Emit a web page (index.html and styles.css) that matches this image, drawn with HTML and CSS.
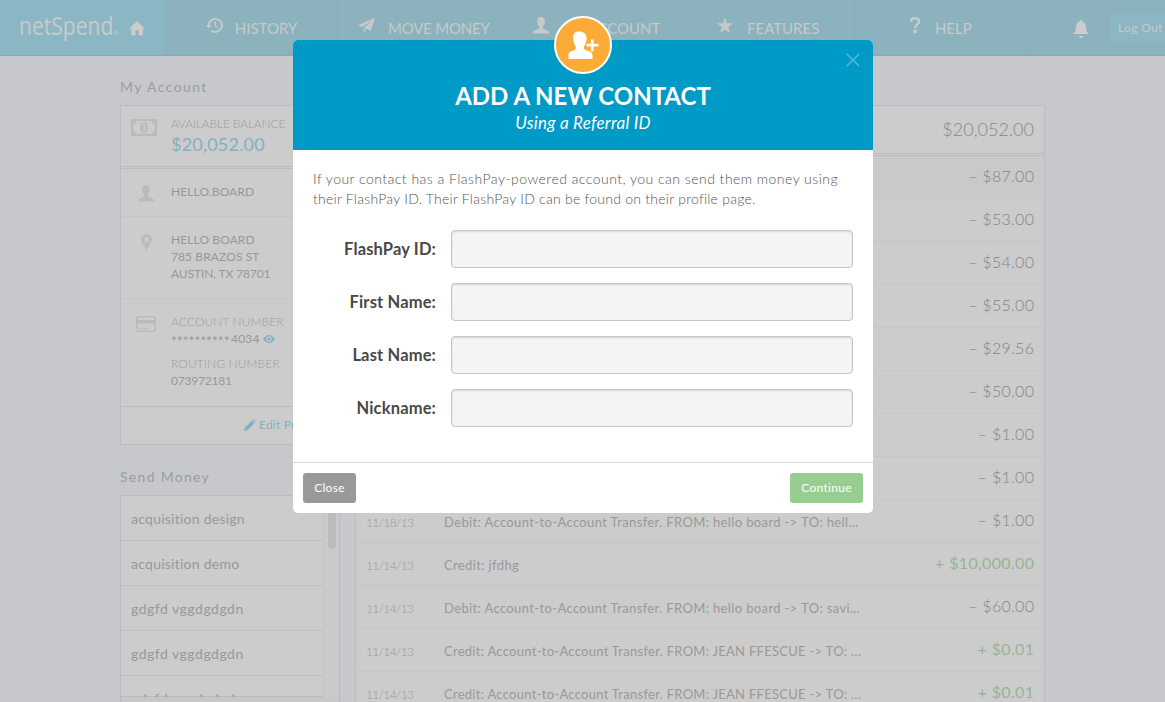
FILE: index.html
```html
<!DOCTYPE html>
<html lang="en">
<head>
<meta charset="utf-8">
<title>Add a New Contact</title>
<link rel="stylesheet" href="styles.css">
</head>
<body>
<svg class="defs" width="0" height="0">
  <symbol id="user" viewBox="0 0 18 17"><path d="M9 0C6 0 4.800 2 5.200 5c.2 2 .9 3.500 1.800 4.600v1.600C6.500 12.500.5 13 .5 16.500h17c0-3.500-6-4-6.500-5.300V9.600C11.900 8.500 12.600 7 12.800 5 13.200 2 12 0 9 0z"/></symbol>
</svg>
<header class="nav">
  <div class="brand"><span class="logo">netSpend</span><i class="reg">®</i>
    <svg class="home" width="16" height="15" viewBox="0 0 16 15"><path d="M8 0L0 8h2.200v6.500h4.300V9h3v5.500h4.300V8H16z"/></svg>
  </div>
  <a class="item history"><svg width="17" height="17" viewBox="0 0 17 17"><path d="M2.700 8.500a6.600 6.600 0 1 1 2.400 5" fill="none" stroke="currentColor" stroke-width="2"/><path d="M0 8h5.400l-2.700 3.800zM8.300 4.500h1.500v4l2.200 2-1 1-2.700-2.500z"/></svg><span>HISTORY</span></a>
  <a class="item move"><svg width="17" height="15" viewBox="0 0 17 15"><path d="M17 0L0 7l4.300 1.900L14 2.500 6 9.800l6.800 2.900zM5.600 10.500v4l2.500-2.900z"/></svg><span>MOVE MONEY</span></a>
  <a class="item account"><svg width="18" height="17"><use href="#user"/></svg><span>MY ACCOUNT</span></a>
  <a class="item features"><svg width="16" height="16" viewBox="0 0 16 16"><path d="M8 0l2 5.800h6l-4.800 3.600 1.800 6L8 11.900l-5 3.500 1.800-6L0 5.800h6z"/></svg><span>FEATURES</span></a>
  <a class="item help"><svg width="12" height="17" viewBox="0 0 12 17"><path d="M2 5C2 2.500 3.500 1.300 6 1.300s4 1.300 4 3.400C10 7.400 6.200 7.500 6.200 11" fill="none" stroke="currentColor" stroke-width="2.500"/><circle cx="6.100" cy="14.500" r="1.900"/></svg><span>HELP</span></a>
  <div class="tools">
    <svg class="bell" width="16" height="18" viewBox="0 0 16 18"><path d="M8 0c.9 0 1.300.7 1.400 1.500 2.500.8 3.400 3 3.600 5.500.3 3.500.8 5 3 7H0c2.200-2 2.700-3.500 3-7 .2-2.500 1.100-4.700 3.600-5.500C6.700.7 7.100 0 8 0zM5.500 16h5c-.5 1-1.500 1.800-2.500 1.800S6 17 5.500 16z"/></svg>
    <a class="logout">Log Out</a>
  </div>
</header>
<main class="page">
  <aside class="side">
    <h2>My Account</h2>
    <section class="panel">
      <div class="row balance">
        <div class="ic"><svg width="26" height="17" viewBox="0 0 26 17"><path fill-rule="evenodd" d="M0 0h26v17H0zM5 2a3 3 0 0 1-3 3v7a3 3 0 0 1 3 3h16a3 3 0 0 1 3-3V5a3 3 0 0 1-3-3z"/><ellipse cx="13" cy="8.500" rx="4" ry="5.500"/><path class="cut" d="M11.300 5.500l1.200-1h1.600v6h1.100v1.300h-3.600v-1.300h1.100V6.200l-1 .4z"/></svg></div>
        <div><p class="cap avail">AVAILABLE BALANCE</p><p class="money">$20,052.00</p></div>
      </div>
      <div class="row name">
        <div class="ic"><svg width="18" height="17"><use href="#user"/></svg></div>
        <p class="user">HELLO.BOARD</p>
      </div>
      <div class="row address">
        <div class="ic"><svg width="11" height="17" viewBox="0 0 11 17"><path fill-rule="evenodd" d="M5.500 0A5.400 5.400 0 0 0 .1 5.500C.1 9 4 12 5.500 17 7 12 10.900 9 10.900 5.500A5.400 5.400 0 0 0 5.500 0zm0 3a2.500 2.500 0 1 1 0 5 2.500 2.500 0 0 1 0-5z"/></svg></div>
        <div><p class="user">HELLO BOARD</p><p>785 BRAZOS ST</p><p class="city">AUSTIN, TX 78701</p></div>
      </div>
      <div class="row numbers">
        <div class="ic"><svg width="20" height="16" viewBox="0 0 20 16"><rect x=".75" y=".75" width="18.500" height="14.500" rx="1.500" fill="none" stroke="currentColor" stroke-width="1.500"/><path d="M1 4h18v3.500H1zM3 12h3v1H3zm4 0h3.500v1H7z"/></svg></div>
        <div>
          <p class="cap acct">ACCOUNT NUMBER</p>
          <p class="masked"><span class="stars">**********</span><span>4034</span><svg width="12" height="8" viewBox="0 0 12 8"><path fill-rule="evenodd" d="M0 4q6-8 12 0-6 8-12 0zm6-2.700a2.700 2.700 0 1 0 0 5.400 2.700 2.700 0 0 0 0-5.400z"/><circle cx="6" cy="4" r="1.500"/></svg></p>
          <p class="cap routing">ROUTING NUMBER</p>
          <p class="digits">073972181</p>
        </div>
      </div>
      <div class="edit"><svg width="12" height="12" viewBox="0 0 12 12"><path d="M0 12l1-3.700L7.700 1.600l2.700 2.700L3.700 11zM8.500.9l.9-.9L12 2.600l-.9.9z"/></svg><span>Edit Profile</span></div>
    </section>
    <h2 class="send">Send Money</h2>
    <section class="panel list">
      <ul><li>acquisition design</li><li>acquisition demo</li><li class="wide">gdgfd vggdgdgdn</li><li class="wide">gdgfd vggdgdgdn</li><li class="wide">gdgfd vggdgdgdn</li></ul>
      <div class="track"><div class="thumb"></div></div>
    </section>
    <div class="listfoot"></div>
  </aside>
  <section class="panel ledger">
    <div class="total">$20,052.00</div>
    <div class="tx first"><span class="amt">– $87.00</span></div>
    <div class="tx"><span class="amt">– $53.00</span></div>
    <div class="tx"><span class="amt">– $54.00</span></div>
    <div class="tx"><span class="amt">– $55.00</span></div>
    <div class="tx"><span class="amt">– $29.56</span></div>
    <div class="tx"><span class="amt">– $50.00</span></div>
    <div class="tx"><span class="amt">– $1.00</span></div>
    <div class="tx"><span class="amt">– $1.00</span></div>
    <div class="tx"><time>11/18/13</time><span class="desc">Debit: Account-to-Account Transfer. FROM: hello board -&gt; TO: hell…</span><span class="amt">– $1.00</span></div>
    <div class="tx"><time>11/14/13</time><span class="desc">Credit: jfdhg</span><span class="amt plus">+ $10,000.00</span></div>
    <div class="tx"><time>11/14/13</time><span class="desc">Debit: Account-to-Account Transfer. FROM: hello board -&gt; TO: savi…</span><span class="amt">– $60.00</span></div>
    <div class="tx"><time>11/14/13</time><span class="desc fe">Credit: Account-to-Account Transfer. FROM: JEAN FFESCUE -&gt; TO: …</span><span class="amt plus">+ $0.01</span></div>
    <div class="tx"><time>11/14/13</time><span class="desc fe">Credit: Account-to-Account Transfer. FROM: JEAN FFESCUE -&gt; TO: …</span><span class="amt plus">+ $0.01</span></div>
  </section>
</main>
<div class="modal">
  <div class="badge"><svg width="32" height="29" viewBox="0 0 32 29"><path d="M11 .5C6.800.5 4.800 3 5.200 7.500c.3 3.500 1 6 2.600 8v2.300C7 20 .5 19.500.5 24v4h24v-4c0-4.500-7.500-4-8.500-6.200v-2.300c1.500-2 2.300-4.500 2.600-8C19 3 15.200.5 11 .5z"/><path d="M18.500 12.800h4.400V8.400h2.700v4.400h4.900v2.700h-4.900v4.700h-2.700v-4.700h-4.400z"/></svg></div>
  <header class="mhead">
    <svg class="close" width="14" height="14" viewBox="0 0 14 14"><path d="M.7.7l12.600 12.600M13.300.7L.7 13.300"/></svg>
    <h1>ADD A NEW CONTACT</h1>
    <p>Using a Referral ID</p>
  </header>
  <div class="mbody">
    <p class="intro"><span class="l1">If your contact has a FlashPay-powered account, you can send them money using</span><br><span class="l2">their FlashPay ID. Their FlashPay ID can be found on their profile page.</span></p>
    <label class="field"><span>FlashPay ID:</span><input type="text"></label>
    <label class="field"><span>First Name:</span><input type="text"></label>
    <label class="field"><span>Last Name:</span><input type="text"></label>
    <label class="field"><span>Nickname:</span><input type="text"></label>
  </div>
  <footer class="mfoot"><button class="btn">Close</button><button class="btn go">Continue</button></footer>
</div>
</body>
</html>
```
FILE: styles.css
```css
* { box-sizing: border-box; margin: 0; padding: 0; }
html, body { height: 702px; overflow: hidden; }
body { background: #c7c8cb; font-family: Lato, "Open Sans", sans-serif; font-size: 12px; color: #999; }
svg { fill: currentColor; display: block; flex: none; }
.defs { position: absolute; }

.nav { display: flex; height: 56px; background: #8cb2bd; border-bottom: 1px solid #86aab6; color: #c6caca; }
.brand { flex: none; width: 166px; display: flex; align-items: flex-start; background: #8bb6c4; border-right: 1px solid #86afbc; padding-left: 19px; }
.logo { font-family: "Open Sans", "Noto Sans", sans-serif; font-size: 26px; line-height: 30px; width: 94px; margin-top: 10px; white-space: nowrap; transform: scaleX(.81); transform-origin: 0 0; -webkit-text-stroke: .2px #c6caca; }
.reg { font-style: normal; font-size: 6px; margin-top: 29px; width: 5px; }
.home { margin: 21px 0 0 11px; color: #ccc; }
.item { flex: none; width: 172.200px; display: flex; justify-content: center; border-right: 1px solid #88acb8; padding-top: 17px; gap: 12px; font-size: 15px; line-height: 22px; white-space: nowrap; }
.item svg { height: 17px; }
.move { letter-spacing: -.2px; gap: 13px; }
.features, .help { gap: 14px; }
.tools { flex: 1; display: flex; padding-left: 46px; overflow: hidden; }
.bell { margin-top: 20px; color: #ccc; }
.logout { flex: none; margin: 14px 0 0 21px; height: 28px; width: 62px; border-radius: 4px; background: #8bb6c4; padding-left: 8px; font-size: 12px; line-height: 28px; letter-spacing: .35px; }

.page { display: flex; gap: 15px; height: 646px; padding-left: 120px; }
.side { width: 220px; }
h2 { font-weight: 400; font-size: 14px; letter-spacing: 1.400px; line-height: 20px; height: 49px; padding-top: 21px; color: #9b9d9e; }
h2.send { height: 50px; padding-top: 22px; letter-spacing: 1.300px; }
.panel { background: #ccc; border: 1px solid #bcbdbf; }
.row { display: flex; line-height: 17px; border-bottom: 1px solid #c5c5c5; padding-top: 14px; white-space: nowrap; letter-spacing: .1px; color: #989898; }
.ic { width: 50px; display: flex; justify-content: center; color: #bbb; }
.cut { fill: #ccc; }
.cap { font-weight: 300; color: #9c9c9c; }
.avail { letter-spacing: -.15px; }
.city { letter-spacing: -.1px; }
.digits { letter-spacing: -.2px; }
.balance { height: 63px; padding-top: 9px; border-bottom: 3px double #bbb; }
.balance .ic { padding: 4px 4px 0 0; }
.money { font-size: 18px; line-height: 24px; color: #82b1c2; letter-spacing: .2px; }
.name { height: 48px; }
.name .ic { padding-top: 2px; }
.address { height: 82px; }
.address .ic { padding-top: 3px; }
.numbers { height: 108px; border-bottom-color: #bbb; }
.numbers .ic { padding-top: 3px; }
.masked { display: flex; align-items: center; height: 17px; letter-spacing: .2px; }
.masked svg { margin-left: 3px; color: #82b1c2; }
.stars { width: 60px; font-size: 14px; padding-top: 3px; letter-spacing: -.1px; }
.routing { margin-top: 8px; }
.edit { display: flex; height: 37px; align-items: center; gap: 3px; padding: 0 0 2px 123px; color: #82b1c2; letter-spacing: .2px; }
.list { display: flex; height: 202px; border-bottom: 0; overflow: hidden; }
.list ul { list-style: none; width: 203px; border-right: 1px solid #c3c3c3; }
.list li { height: 45px; line-height: 46px; border-bottom: 1px solid #bfbfbf; padding-left: 10px; font-size: 14px; letter-spacing: .25px; color: #989898; }
.list .wide { letter-spacing: .5px; }
.track { flex: 1; background: #cacaca; padding-left: 4px; }
.thumb { width: 8px; height: 53px; border-radius: 0 0 4px 4px; background: #bbb; }
.listfoot { height: 6px; margin-top: -1px; border: 1px solid #bbb; border-bottom: 0; background: #c8c8c8; }

.ledger { width: 690px; height: 597px; margin-top: 49px; border-bottom: 0; overflow: hidden; }
.total { height: 50px; border-bottom: 3px double #bbb; padding-right: 10px; text-align: right; font-size: 18px; line-height: 47px; font-weight: 300; color: #888; }
.tx { display: flex; height: 43px; line-height: 43px; padding: 0 10px; border-bottom: 1px solid #c6c6c6; white-space: nowrap; }
.first { background: #c9c9c9; }
time { width: 78px; font-weight: 300; color: #999; letter-spacing: -.6px; padding-top: 1px; }
.desc { width: 440px; font-size: 13px; padding-top: 1px; color: #999; letter-spacing: .37px; }
.fe { letter-spacing: .28px; }
.amt { margin-left: auto; font-size: 16px; line-height: 40px; font-weight: 300; color: #858585; letter-spacing: .3px; margin-right: -.3px; }
.plus { font-weight: 400; color: #97b592; letter-spacing: .35px; }

.modal { position: absolute; left: 293px; top: 40px; width: 580px; height: 473px; background: #fff; border-radius: 5px; }
.badge { position: absolute; left: 261px; top: -24px; width: 58px; height: 58px; border: 2px solid #fff; border-radius: 50%; background: #fbab36; color: #fff; padding: 13px 0 0 12px; }
.mhead { height: 110px; background: #009ac7; border-radius: 5px 5px 0 0; text-align: center; color: #fff; padding-top: 41px; }
.close { position: absolute; right: 13px; top: 13px; stroke: #59bbdb; stroke-width: 1.300; }
h1 { font-size: 24px; line-height: 30px; font-weight: 700; letter-spacing: 0; }
.mhead p { font-size: 17px; line-height: 24px; font-style: italic; letter-spacing: .25px; }
.mbody { height: 312px; padding: 19px 20px 0; }
.intro { font-size: 14px; line-height: 20px; height: 61px; font-weight: 300; color: #555; white-space: nowrap; }
.l1 { letter-spacing: .47px; }
.l2 { letter-spacing: .25px; }
.field { display: flex; justify-content: space-between; margin-bottom: 15px; }
.field span { width: 123px; text-align: right; font-size: 16.500px; line-height: 38px; font-weight: 700; color: #484848; letter-spacing: .15px; }
.field input { width: 402px; height: 38px; border: 1px solid #c6c6c6; border-radius: 4px; background: #f4f4f4; box-shadow: inset 0 1px 2px rgba(0,0,0,.12); }
.mfoot { height: 51px; border-top: 1px solid #d8d8d8; display: flex; justify-content: space-between; padding: 10px; }
.btn { height: 30px; width: 53px; border: 0; border-radius: 3px; background: #999; color: #fff; font: 12px Lato, sans-serif; letter-spacing: .3px; padding-bottom: 2px; }
.go { width: 73px; background: #96ce91; }
```
